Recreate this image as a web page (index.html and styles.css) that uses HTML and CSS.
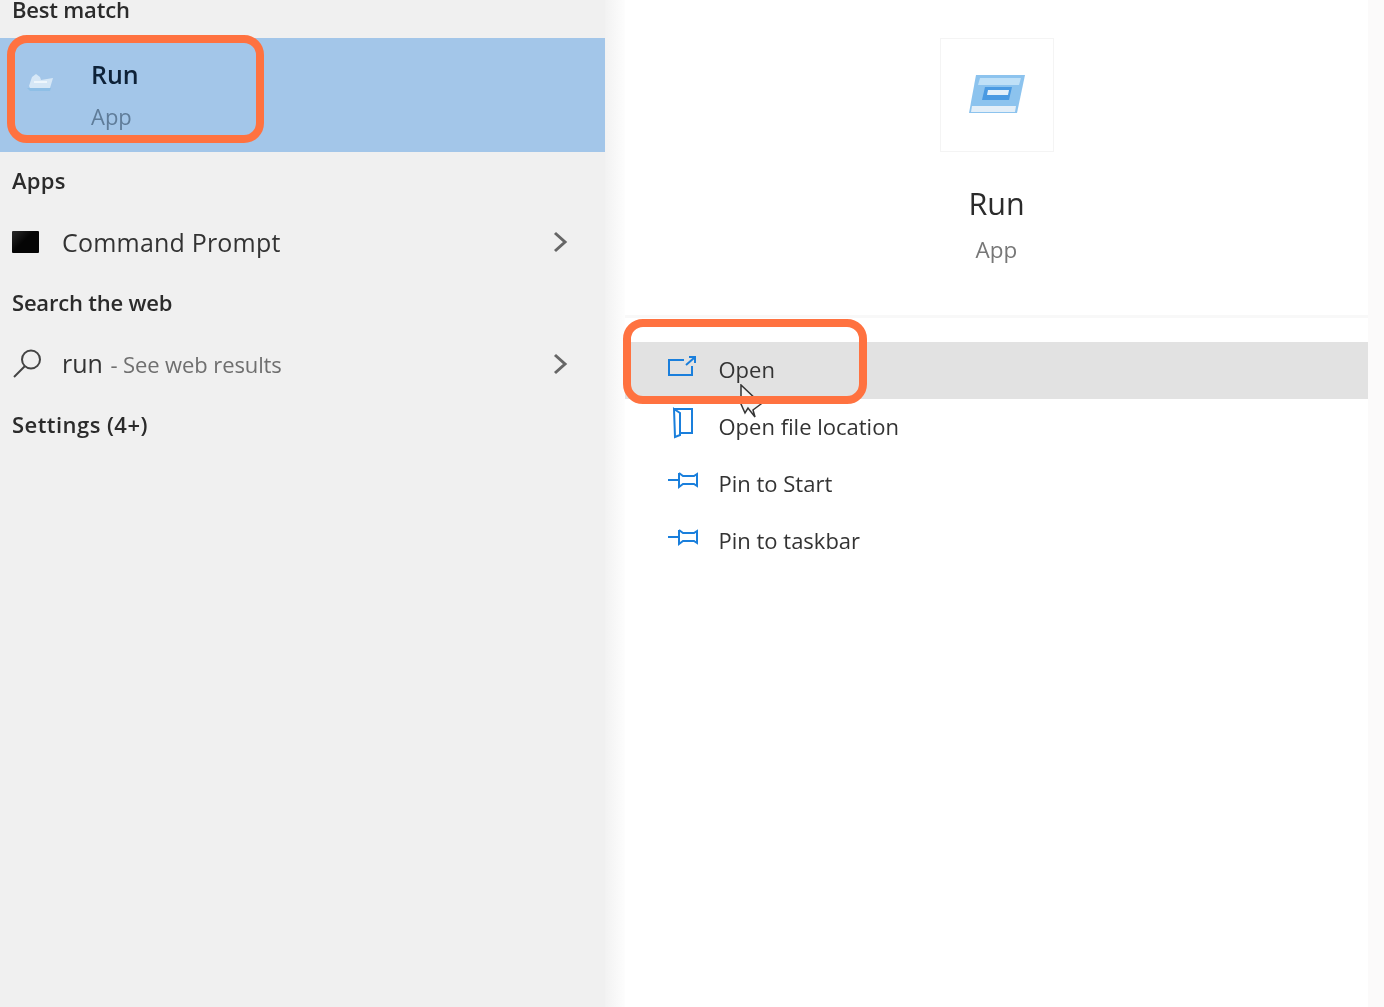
FILE: index.html
```html
<!DOCTYPE html>
<html lang="en">
<head>
<meta charset="utf-8">
<title>Run</title>
<link rel="stylesheet" href="styles.css">
</head>
<body>
<div class="screen">
  <section class="results">
    <h2 class="heading heading-top">Best match</h2>
    <div class="best">
      <svg class="best-icon" width="30" height="22" viewBox="0 0 30 22"><path d="M3 14 L6 5 L10 2 L14 5 L15 8 L27 6 L24 16 L4 16 Z" fill="#d6e7f6"/><path d="M1 16 H25 L24 19 H4 Z" fill="#8fbfe6"/><path d="M8 10 H21" stroke="#eef6fc" stroke-width="2"/></svg>
      <div class="best-text">
        <div class="best-name">Run</div>
        <div class="best-type">App</div>
      </div>
    </div>
    <h2 class="heading heading-apps">Apps</h2>
    <div class="row">
      <span class="cmd-icon"></span>
      <span class="row-label row-label-wide">Command Prompt</span>
      <svg class="chev" width="16" height="24" viewBox="0 0 16 24"><path d="M3 3 L13 12 L3 21" fill="none" stroke="#666" stroke-width="3"/></svg>
    </div>
    <h2 class="heading">Search the web</h2>
    <div class="row row-web">
      <svg class="search-icon" width="32" height="32" viewBox="0 0 32 32"><circle cx="19" cy="12.500" r="9" fill="none" stroke="#444" stroke-width="2"/><path d="M13 19 L2 30" stroke="#444" stroke-width="2"/></svg>
      <span class="row-label">run<span class="row-hint"> - See web results</span></span>
      <svg class="chev" width="16" height="24" viewBox="0 0 16 24"><path d="M3 3 L13 12 L3 21" fill="none" stroke="#666" stroke-width="3"/></svg>
    </div>
    <h2 class="heading heading-settings">Settings (4+)</h2>
  </section>
  <div class="fade"></div>
  <section class="detail">
    <div class="summary">
      <div class="tile">
        <svg class="tile-icon" width="58" height="40" viewBox="0 0 58 40"><path d="M8 1 H57 L49 39 H1 Z" fill="#8cc3ee"/><path d="M12 4 H53 L51 11 H10 Z" fill="#bfe0f7"/><path d="M17 13 H44 L41 26 H14 Z" fill="#4a9ae2"/><path d="M20 16 H41 L40 21 H19 Z" fill="#e3f0fa"/><path d="M4 32 H48 L47 38 H3 Z" fill="#e2eef8"/></svg>
      </div>
      <div class="summary-name">Run</div>
      <div class="summary-type">App</div>
    </div>
    <ul class="actions">
      <li class="action action-hot">
        <svg class="action-icon" width="30" height="24" viewBox="0 0 30 24"><path d="M16 6 H1 V21 H24 V12" fill="none" stroke="#1a7fdc" stroke-width="2"/><path d="M18 11 L26 4 M21 3 H27 V9" fill="none" stroke="#1a7fdc" stroke-width="2"/></svg>
        <span>Open</span>
      </li>
      <li class="action">
        <svg class="action-icon action-icon-tall" width="30" height="32" viewBox="0 0 30 32"><path d="M6 2 H24 V26 H12 M6 2 L12 6 V28 L7 30 Z" fill="none" stroke="#1a7fdc" stroke-width="2"/></svg>
        <span>Open file location</span>
      </li>
      <li class="action">
        <svg class="action-icon action-icon-pin" width="30" height="20" viewBox="0 0 30 20"><path d="M0 10 H11 M11 3 V17 L15 14 H26 L29 16 V4 L26 6 H15 L11 3" fill="none" stroke="#1a7fdc" stroke-width="2"/></svg>
        <span>Pin to Start</span>
      </li>
      <li class="action">
        <svg class="action-icon action-icon-pin" width="30" height="20" viewBox="0 0 30 20"><path d="M0 10 H11 M11 3 V17 L15 14 H26 L29 16 V4 L26 6 H15 L11 3" fill="none" stroke="#1a7fdc" stroke-width="2"/></svg>
        <span>Pin to taskbar</span>
      </li>
    </ul>
  </section>
  <svg class="pointer" width="24" height="36" viewBox="0 0 24 36"><path d="M2 1 V20 L6 29 L9 24 L16 33 L14 26 L22 20 Z" fill="#f4f4f4" stroke="#333" stroke-width="1.500"/></svg>
  <div class="mark mark-best"></div>
  <div class="mark mark-open"></div>
</div>
</body>
</html>
```
FILE: styles.css
```css
* { box-sizing: border-box; }
html, body { margin: 0; padding: 0; }
body { font-family: "Open Sans", "Noto Sans", sans-serif; background: #fff; color: #222; }
.screen { position: relative; width: 1384px; height: 1007px; overflow: hidden; display: flex; background: #fbfafa; filter: blur(0.45px); }
.results { width: 605px; height: 1007px; background: #f0f0f0; flex: none; }
.fade { width: 20px; height: 1007px; flex: none; background: linear-gradient(to right, #f2f2f2, #fdfdfd); }
.heading { margin: 0; height: 61px; display: flex; align-items: center; padding: 0 0 5px 12px; font-size: 22px; font-weight: 600; color: #2b2b2b; letter-spacing: -0.2px; }
.heading-top { height: 38px; align-items: flex-start; padding: 0 0 0 12px; line-height: 19px; }
.heading-apps { letter-spacing: 0.3px; }
.heading-settings { letter-spacing: 0.45px; }
.best { height: 114px; background: #a3c6e9; display: flex; align-items: center; }
.best-icon { margin: 0 35px 24px 26px; flex: none; }
.best-name { font-size: 25px; font-weight: 600; color: #0e2238; line-height: 34px; }
.best-type { font-size: 22px; color: #5f7c99; line-height: 30px; margin-top: 10px; }
.best-text { padding-bottom: 2px; }
.row { height: 61px; display: flex; align-items: center; position: relative; padding: 0 0 4px 12px; }
.row-web { padding-bottom: 6px; }
.cmd-icon { width: 27px; height: 22px; background: linear-gradient(135deg, #2a2a2a, #050505 45%); flex: none; margin-right: 23px; border-radius: 1px; }
.search-icon { flex: none; margin: 0 18px 0 0; }
.row-label { font-size: 25px; color: #333; }
.row-label-wide { letter-spacing: 0.2px; }
.row-hint { font-size: 22px; color: #6f6f6f; letter-spacing: -0.11px; padding-left: 2px; }
.chev { position: absolute; left: 552px; top: 17px; }
.detail { width: 743px; height: 1007px; background: #fff; flex: none; }
.summary { height: 318px; border-bottom: 3px solid #f8f8f8; display: flex; flex-direction: column; align-items: center; padding-top: 38px; }
.tile { width: 114px; height: 114px; border: 1px solid #f4f4f4; display: flex; align-items: center; justify-content: center; }
.tile-icon { margin-bottom: 2px; }
.summary-name { font-size: 30.5px; color: #2b2b2b; line-height: 42px; margin-top: 30px; }
.summary-type { font-size: 22.5px; color: #777; line-height: 30px; margin-top: 11px; }
.actions { list-style: none; margin: 24px 0 0; padding: 0; }
.action { height: 57px; display: flex; align-items: center; font-size: 22px; color: #333; position: relative; padding: 0 0 3px 93.5px; }
.action-hot { background: #e2e2e2; }
.action-icon { position: absolute; left: 43px; top: 12px; }
.action-icon-tall { top: 8px; }
.action-icon-pin { top: 14px; }
.mark { position: absolute; border: 8px solid #ff7240; background: transparent; }
.mark-best { left: 7px; top: 35px; width: 257px; height: 108px; border-radius: 20px; }
.mark-open { left: 623px; top: 319px; width: 244px; height: 85px; border-radius: 20px; }
.pointer { position: absolute; left: 739px; top: 384px; }
```
